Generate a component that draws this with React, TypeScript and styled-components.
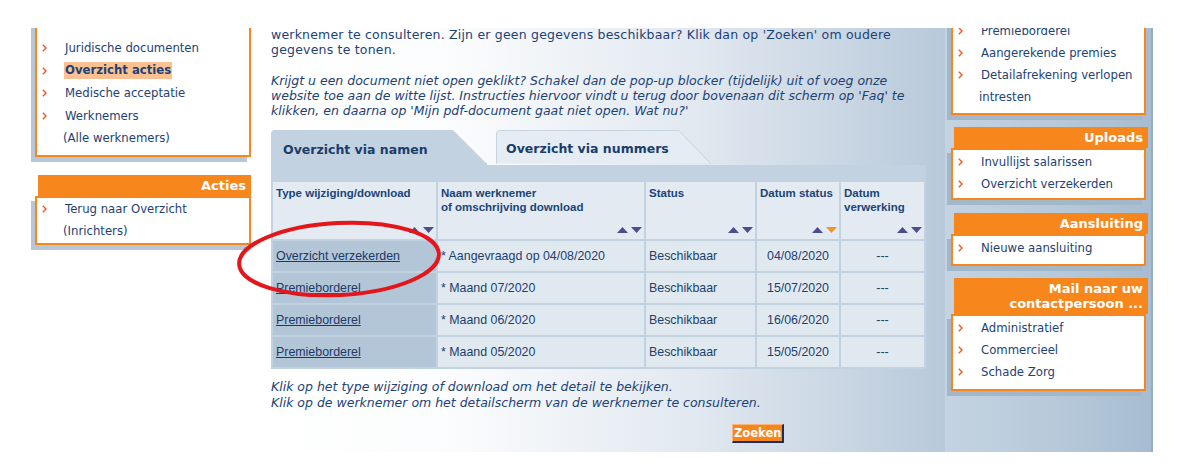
import styled, { createGlobalStyle } from 'styled-components';

const GlobalStyle = createGlobalStyle`
  html, body {
    margin: 0;
    padding: 0;
    background: #ffffff;
  }

  body {
    font-family: 'DejaVu Sans', Verdana, sans-serif;
    color: #1d4274;
  }

  * {
    box-sizing: border-box;
  }
`;

const orange = '#f7861c';
const navy = '#1d4274';

const Page = styled.div`
  position: relative;
  width: 1189px;
  height: 476px;
  padding-top: 28px;
  overflow: hidden;
`;

const Main = styled.div`
  display: flex;
  height: 424px;
  overflow: hidden;
`;

const SideCol = styled.aside<{ $side: 'left' | 'right' }>`
  display: flex;
  flex-direction: column;
  flex-shrink: 0;
  width: ${({ $side }) => ($side === 'left' ? '258px' : '208px')};
  padding: ${({ $side }) => ($side === 'left' ? '0 7px 0 35px' : '0 5px 0 6px')};
  background: ${({ $side }) =>
    $side === 'left' ? '#ffffff' : 'linear-gradient(to right, #c4d3e1 0%, #b5c8d9 60%, #a7bcd0 100%)'};
  border-right: ${({ $side }) => ($side === 'right' ? '2px solid #97adc3' : 'none')};
`;

const PanelHeader = styled.div<{ $gap: number; $overhang: number }>`
  margin: ${({ $gap, $overhang }) => `${$gap}px -${$overhang}px 0 3px`};
  padding: 3px 5px 3px 8px;
  background: ${orange};
  color: #ffffff;
  font-size: 13px;
  font-weight: bold;
  line-height: 15px;
  text-align: right;
`;

const Panel = styled.div<{ $shift: number; $shadow: string; $pad: string }>`
  margin-top: ${({ $shift }) => $shift}px;
  padding: ${({ $pad }) => $pad};
  background: #ffffff;
  border: 2px solid ${orange};
  box-shadow: -4px 5px 0 ${({ $shadow }) => $shadow};
`;

const MenuList = styled.ul<{ $lh: number }>`
  --lh: ${({ $lh }) => $lh}px;
  margin: 0;
  padding: 0;
  list-style: none;
  font-size: 11.7px;
  line-height: var(--lh);
`;

const MenuItem = styled.li`
  display: flex;
  align-items: center;
  height: var(--lh);
  padding-left: 5px;
  white-space: nowrap;
`;

const MenuCont = styled.li`
  height: var(--lh);
  padding-left: 26px;
  white-space: nowrap;
`;

const ChevronIcon = styled.svg`
  flex-shrink: 0;
  width: 5px;
  height: 8px;
  margin-right: 18px;
`;

const MenuText = styled.span<{ $active?: boolean }>`
  display: inline-block;
  color: ${navy};
  font-weight: ${({ $active }) => ($active ? 'bold' : 'normal')};
  background: ${({ $active }) => ($active ? '#fbc193' : 'transparent')};
  padding: ${({ $active }) => ($active ? '1px 1px' : '0')};
  margin-left: ${({ $active }) => ($active ? '-1px' : '0')};
  line-height: ${({ $active }) => ($active ? '15px' : 'inherit')};
`;

const Chevron = () => (
  <ChevronIcon viewBox="0 0 5 8">
    <polyline points="0.8,0.8 4,4 0.8,7.2" fill="none" stroke="#ee5a24" strokeWidth="1.4" />
  </ChevronIcon>
);

const Center = styled.main`
  flex-shrink: 0;
  width: 687px;
  padding-left: 13px;
  background: linear-gradient(to right, #ffffff 0%, #fbfcfd 28%, #e1e8f0 64%, #b8c9da 100%);
`;

const Para = styled.p<{ $italic?: boolean; $top: number; $lh: number }>`
  margin: ${({ $top }) => $top}px 0 0 0;
  font-size: 12.5px;
  line-height: ${({ $lh }) => $lh}px;
  font-style: ${({ $italic }) => ($italic ? 'italic' : 'normal')};
  letter-spacing: ${({ $italic }) => ($italic ? '0' : '0.2px')};
  color: ${navy};
  white-space: nowrap;
`;

const TabBar = styled.div`
  display: flex;
  gap: 9px;
  height: 35px;
  margin-top: 12px;
`;

const Tab = styled.div<{ $active?: boolean }>`
  position: relative;
  width: 216px;
  height: 35px;
  padding: ${({ $active }) => ($active ? '12px 0 0 12px' : '11px 0 0 10px')};
  font-size: 12.5px;
  font-weight: bold;
  line-height: 15px;
  color: #1a3d6c;
  z-index: 0;
`;

const TabShape = styled.svg`
  position: absolute;
  inset: 0;
  width: 100%;
  height: 100%;
  z-index: -1;
`;

const TableFrame = styled.div`
  display: grid;
  grid-template-columns: 163px 206px 109px 82px 83px;
  gap: 2px;
  width: 655px;
  padding: 17px 2px 2px;
  background: #c3d2e1;
`;

const HeadCell = styled.div`
  display: flex;
  flex-direction: column;
  justify-content: space-between;
  height: 57px;
  padding: 4px 2px 6px 3px;
  background: #e3eaf2;
  font-family: 'Liberation Sans', Arial, sans-serif;
  font-size: 11.5px;
  font-weight: bold;
  line-height: 14px;
  color: #1a4577;
`;

const SortIcon = styled.svg`
  align-self: flex-end;
  width: 25px;
  height: 6px;
`;

const DataCell = styled.div<{ $kind: 'link' | 'text' | 'center' }>`
  display: flex;
  align-items: center;
  justify-content: ${({ $kind }) => ($kind === 'center' ? 'center' : 'flex-start')};
  height: 30px;
  padding: 0 3px;
  background: ${({ $kind }) => ($kind === 'link' ? '#b3c6d8' : 'rgba(255, 255, 255, 0.5)')};
  font-family: 'Liberation Sans', Arial, sans-serif;
  font-size: 12.4px;
  color: #1b3f6f;
  white-space: nowrap;
`;

const DocLink = styled.a`
  color: #1b3a68;
  text-decoration: underline;
`;

const ZoekRow = styled.div`
  display: flex;
  margin-top: 13px;
  padding-left: 461px;
`;

const ZoekButton = styled.button`
  height: 19px;
  padding: 0 1px;
  border: 1px solid;
  border-color: #fbb57a #1f2d57 #1f2d57 #fbb57a;
  border-width: 1px 2px 2px 1px;
  background: ${orange};
  color: #ffffff;
  font-family: 'DejaVu Sans', Verdana, sans-serif;
  font-size: 11.5px;
  font-weight: bold;
  line-height: 15px;
`;

const Annotation = styled.svg`
  position: absolute;
  left: 230px;
  top: 214px;
  width: 220px;
  height: 92px;
  pointer-events: none;
`;

type SortState = 'none' | 'desc';

const SortArrows = ({ state }: { state: SortState }) => (
  <SortIcon viewBox="0 0 25 6">
    <polygon points="0,6 5.5,0 11,6" fill="#4b4d8d" />
    <polygon points="14,0 25,0 19.5,6" fill={state === 'desc' ? '#f5911f' : '#4b4d8d'} />
  </SortIcon>
);

const headers: { lines: string[]; sort: SortState }[] = [
  { lines: ['Type wijziging/download'], sort: 'none' },
  { lines: ['Naam werknemer', 'of omschrijving download'], sort: 'none' },
  { lines: ['Status'], sort: 'none' },
  { lines: ['Datum status'], sort: 'desc' },
  { lines: ['Datum', 'verwerking'], sort: 'none' },
];

const rows = [
  ['Overzicht verzekerden', '* Aangevraagd op 04/08/2020', 'Beschikbaar', '04/08/2020', '---'],
  ['Premieborderel', '* Maand 07/2020', 'Beschikbaar', '15/07/2020', '---'],
  ['Premieborderel', '* Maand 06/2020', 'Beschikbaar', '16/06/2020', '---'],
  ['Premieborderel', '* Maand 05/2020', 'Beschikbaar', '15/05/2020', '---'],
];

const App = () => {
  return (
    <>
      <GlobalStyle />
      <Page>
        <Main>
          <SideCol $side="left">
            <Panel $shift={-10} $shadow="#b7c7d7" $pad="17px 0 5px">
              <MenuList $lh={22.5}>
                <MenuItem>
                  <Chevron />
                  <MenuText>Juridische documenten</MenuText>
                </MenuItem>
                <MenuItem>
                  <Chevron />
                  <MenuText $active>Overzicht acties</MenuText>
                </MenuItem>
                <MenuItem>
                  <Chevron />
                  <MenuText>Medische acceptatie</MenuText>
                </MenuItem>
                <MenuItem>
                  <Chevron />
                  <MenuText>Werknemers</MenuText>
                </MenuItem>
                <MenuCont>
                  <MenuText>(Alle werknemers)</MenuText>
                </MenuCont>
              </MenuList>
            </Panel>

            <PanelHeader $gap={18} $overhang={0}>Acties</PanelHeader>
            <Panel $shift={0} $shadow="#b7c7d7" $pad="0">
              <MenuList $lh={22.5}>
                <MenuItem>
                  <Chevron />
                  <MenuText>Terug naar Overzicht</MenuText>
                </MenuItem>
                <MenuCont>
                  <MenuText>(Inrichters)</MenuText>
                </MenuCont>
              </MenuList>
            </Panel>
          </SideCol>

          <Center>
            <Para $top={-1} $lh={15}>
              werknemer te consulteren. Zijn er geen gegevens beschikbaar? Klik dan op 'Zoeken' om oudere
              <br />
              gegevens te tonen.
            </Para>
            <Para $italic $top={16} $lh={15}>
              Krijgt u een document niet open geklikt? Schakel dan de pop-up blocker (tijdelijk) uit of voeg onze
              <br />
              website toe aan de witte lijst. Instructies hiervoor vindt u terug door bovenaan dit scherm op 'Faq' te
              <br />
              klikken, en daarna op 'Mijn pdf-document gaat niet open. Wat nu?'
            </Para>

            <TabBar>
              <Tab $active>
                <TabShape viewBox="0 0 216 35" preserveAspectRatio="none">
                  <path d="M0 35 V4 Q0 0 4 0 H182 L215 33 H216 V35 Z" fill="#c3d2e1" />
                </TabShape>
                Overzicht via namen
              </Tab>
              <Tab>
                <TabShape viewBox="0 0 216 35" preserveAspectRatio="none">
                  <path
                    d="M0.5 33.5 V4 Q0.5 0.5 4 0.5 H183 L214.5 33.5"
                    fill="#e5ecf3"
                    stroke="#c6d3e0"
                    strokeWidth="1"
                  />
                </TabShape>
                Overzicht via nummers
              </Tab>
            </TabBar>

            <TableFrame>
              {headers.map((header) => (
                <HeadCell key={header.lines[0]}>
                  <span>
                    {header.lines.map((line) => (
                      <div key={line}>{line}</div>
                    ))}
                  </span>
                  <SortArrows state={header.sort} />
                </HeadCell>
              ))}
              {rows.map((row, rowIndex) =>
                row.map((value, colIndex) => (
                  <DataCell
                    key={`${rowIndex}-${colIndex}`}
                    $kind={colIndex === 0 ? 'link' : colIndex >= 3 ? 'center' : 'text'}
                  >
                    {colIndex === 0 ? <DocLink href="#">{value}</DocLink> : value}
                  </DataCell>
                )),
              )}
            </TableFrame>

            <Para $italic $top={10} $lh={16}>
              Klik op het type wijziging of download om het detail te bekijken.
              <br />
              Klik op de werknemer om het detailscherm van de werknemer te consulteren.
            </Para>

            <ZoekRow>
              <ZoekButton type="button">Zoeken</ZoekButton>
            </ZoekRow>
          </Center>

          <SideCol $side="right">
            <Panel $shift={-14} $shadow="#a3b7cb" $pad="4px 0 5px">
              <MenuList $lh={22}>
                <MenuItem>
                  <Chevron />
                  <MenuText>Premieborderel</MenuText>
                </MenuItem>
                <MenuItem>
                  <Chevron />
                  <MenuText>Aangerekende premies</MenuText>
                </MenuItem>
                <MenuItem>
                  <Chevron />
                  <MenuText>Detailafrekening verlopen</MenuText>
                </MenuItem>
                <MenuCont>
                  <MenuText>intresten</MenuText>
                </MenuCont>
              </MenuList>
            </Panel>

            <PanelHeader $gap={12} $overhang={2}>Uploads</PanelHeader>
            <Panel $shift={0} $shadow="#a3b7cb" $pad="1px 0 3px">
              <MenuList $lh={22}>
                <MenuItem>
                  <Chevron />
                  <MenuText>Invullijst salarissen</MenuText>
                </MenuItem>
                <MenuItem>
                  <Chevron />
                  <MenuText>Overzicht verzekerden</MenuText>
                </MenuItem>
              </MenuList>
            </Panel>

            <PanelHeader $gap={13} $overhang={2}>Aansluiting</PanelHeader>
            <Panel $shift={0} $shadow="#a3b7cb" $pad="1px 0 5px">
              <MenuList $lh={22}>
                <MenuItem>
                  <Chevron />
                  <MenuText>Nieuwe aansluiting</MenuText>
                </MenuItem>
              </MenuList>
            </Panel>

            <PanelHeader $gap={12} $overhang={2}>
              Mail naar uw
              <br />
              contactpersoon ...
            </PanelHeader>
            <Panel $shift={0} $shadow="#a3b7cb" $pad="1px 0 6px">
              <MenuList $lh={22}>
                <MenuItem>
                  <Chevron />
                  <MenuText>Administratief</MenuText>
                </MenuItem>
                <MenuItem>
                  <Chevron />
                  <MenuText>Commercieel</MenuText>
                </MenuItem>
                <MenuItem>
                  <Chevron />
                  <MenuText>Schade Zorg</MenuText>
                </MenuItem>
              </MenuList>
            </Panel>
          </SideCol>
        </Main>

        <Annotation viewBox="0 0 220 92">
          <ellipse
            cx="109"
            cy="45"
            rx="100"
            ry="36"
            transform="rotate(-3 109 45)"
            fill="none"
            stroke="#e3161b"
            strokeWidth="4"
          />
        </Annotation>
      </Page>
    </>
  );
};

export default App;
